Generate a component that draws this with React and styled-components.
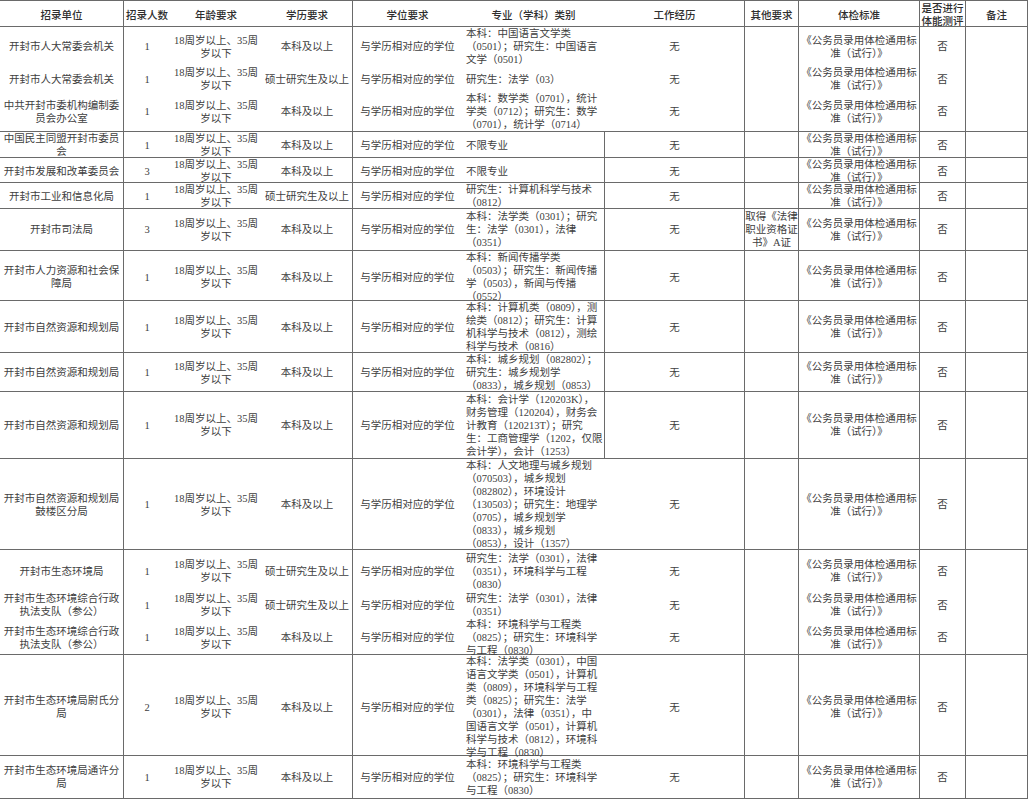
import styled, { createGlobalStyle } from "styled-components";

const GlobalStyle = createGlobalStyle`
  html, body {
    margin: 0;
    padding: 0;
    background: #ffffff;
  }
  body {
    font-family: "Liberation Serif", "Noto Sans CJK SC", serif;
  }
`;

const COLS = "124px 46px 92px 91px 109px 143px 140px 54px 121px 46px 62px";
const RULE = "1px solid #6a6a6a";

const AGE = ["18周岁以上、35周", "岁以下"];
const EXAM = ["《公务员录用体检通用标", "准（试行）》"];
const DEGREE = "与学历相对应的学位";

const rows = [
  { h: 39, line: false, unit: ["开封市人大常委会机关"], n: 1, edu: "本科及以上",
    major: ["本科：中国语言文学类", "（0501）；研究生：中国语言", "文学（0501）"] },
  { h: 26, line: false, unit: ["开封市人大常委会机关"], n: 1, edu: "硕士研究生及以上",
    major: ["研究生：法学（03）"] },
  { h: 40, line: true, unit: ["中共开封市委机构编制委", "员会办公室"], n: 1, edu: "本科及以上",
    major: ["本科：数学类（0701），统计", "学类（0712）；研究生：数学", "（0701），统计学（0714）"] },
  { h: 26, line: true, mid: true, unit: ["中国民主同盟开封市委员", "会"], n: 1, edu: "本科及以上",
    major: ["不限专业"] },
  { h: 25, line: true, mid: true, unit: ["开封市发展和改革委员会"], n: 3, edu: "本科及以上",
    major: ["不限专业"] },
  { h: 26, line: true, mid: true, unit: ["开封市工业和信息化局"], n: 1, edu: "硕士研究生及以上",
    major: ["研究生：计算机科学与技术", "（0812）"] },
  { h: 42, line: true, mid: true, unit: ["开封市司法局"], n: 3, edu: "本科及以上",
    major: ["本科：法学类（0301）；研究", "生：法学（0301），法律", "（0351）"],
    other: ["取得《法律", "职业资格证", "书》A证"] },
  { h: 50, line: true, mid: true, unit: ["开封市人力资源和社会保", "障局"], n: 1, edu: "本科及以上",
    major: ["本科：新闻传播学类", "（0503）；研究生：新闻传播", "学（0503），新闻与传播", "（0552）"] },
  { h: 52, line: true, mid: true, unit: ["开封市自然资源和规划局"], n: 1, edu: "本科及以上",
    major: ["本科：计算机类（0809），测", "绘类（0812）；研究生：计算", "机科学与技术（0812），测绘", "科学与技术（0816）"] },
  { h: 39, line: true, mid: true, unit: ["开封市自然资源和规划局"], n: 1, edu: "本科及以上",
    major: ["本科：城乡规划（082802）；", "研究生：城乡规划学", "（0833），城乡规划（0853）"] },
  { h: 67, line: true, mid: true, unit: ["开封市自然资源和规划局"], n: 1, edu: "本科及以上",
    major: ["本科：会计学（120203K），", "财务管理（120204），财务会", "计教育（120213T）；研究", "生：工商管理学（1202，仅限", "会计学），会计（1253）"] },
  { h: 91, line: true, unit: ["开封市自然资源和规划局", "鼓楼区分局"], n: 1, edu: "本科及以上",
    major: ["本科：人文地理与城乡规划", "（070503），城乡规划", "（082802），环境设计", "（130503）；研究生：地理学", "（0705），城乡规划学", "（0833），城乡规划", "（0853），设计（1357）"] },
  { h: 42, line: false, unit: ["开封市生态环境局"], n: 1, edu: "硕士研究生及以上",
    major: ["研究生：法学（0301），法律", "（0351），环境科学与工程", "（0830）"] },
  { h: 26, line: false, unit: ["开封市生态环境综合行政", "执法支队（参公）"], n: 1, edu: "硕士研究生及以上",
    major: ["研究生：法学（0301），法律", "（0351）"] },
  { h: 37, line: true, unit: ["开封市生态环境综合行政", "执法支队（参公）"], n: 1, edu: "本科及以上",
    major: ["本科：环境科学与工程类", "（0825）；研究生：环境科学", "与工程（0830）"] },
  { h: 101, line: true, unit: ["开封市生态环境局尉氏分", "局"], n: 2, edu: "本科及以上",
    major: ["本科：法学类（0301），中国", "语言文学类（0501），计算机", "类（0809），环境科学与工程", "类（0825）；研究生：法学", "（0301），法律（0351），中", "国语言文学（0501），计算机", "科学与技术（0812），环境科", "学与工程（0830）"] },
  { h: 43, line: true, unit: ["开封市生态环境局通许分", "局"], n: 1, edu: "本科及以上",
    major: ["本科：环境科学与工程类", "（0825）；研究生：环境科学", "与工程（0830）"] },
];

const Sheet = styled.div`
  width: 1028px;
  border-top: ${RULE};
  color: #404040;
  font-size: 10.5px;
  line-height: 13px;
`;

const Row = styled.div`
  display: grid;
  grid-template-columns: ${COLS};
  height: ${(p) => p.$h}px;
  box-sizing: border-box;
  border-bottom: ${(p) => (p.$line ? RULE : "none")};
`;

const Cell = styled.div`
  display: flex;
  flex-direction: column;
  justify-content: center;
  align-items: ${(p) => (p.$left ? "flex-start" : "center")};
  text-align: ${(p) => (p.$left ? "left" : "center")};
  padding: 0 ${(p) => (p.$left ? "4px" : "1px")};
  border-right: ${(p) => (p.$rule ? RULE : "none")};
  white-space: nowrap;
  min-width: 0;
  font-weight: 400;
`;

const HeadCell = styled(Cell)`
  font-family: "Noto Sans CJK SC", sans-serif;
  font-weight: 500;
  color: #2e2e2e;
`;

const Line = styled.span`
  display: block;
`;

const Lines = ({ items }) =>
  items.map((t, i) => <Line key={i}>{t}</Line>);

const Header = () => (
  <Row $h={26} $line>
    <HeadCell $rule>招录单位</HeadCell>
    <HeadCell>招录人数</HeadCell>
    <HeadCell>年龄要求</HeadCell>
    <HeadCell $rule>学历要求</HeadCell>
    <HeadCell>学位要求</HeadCell>
    <HeadCell>专业（学科）类别</HeadCell>
    <HeadCell $rule>工作经历</HeadCell>
    <HeadCell $rule>其他要求</HeadCell>
    <HeadCell $rule>体检标准</HeadCell>
    <HeadCell $rule>
      <Lines items={["是否进行", "体能测评"]} />
    </HeadCell>
    <HeadCell $rule>备注</HeadCell>
  </Row>
);

const PostRow = ({ row }) => (
  <Row $h={row.h} $line={row.line}>
    <Cell $rule>
      <Lines items={row.unit} />
    </Cell>
    <Cell>{row.n}</Cell>
    <Cell>
      <Lines items={AGE} />
    </Cell>
    <Cell $rule>{row.edu}</Cell>
    <Cell>{DEGREE}</Cell>
    <Cell $left $rule={row.mid}>
      <Lines items={row.major} />
    </Cell>
    <Cell $rule>无</Cell>
    <Cell $rule>{row.other && <Lines items={row.other} />}</Cell>
    <Cell $rule>
      <Lines items={EXAM} />
    </Cell>
    <Cell $rule>否</Cell>
    <Cell $rule />
  </Row>
);

export default function App() {
  return (
    <>
      <GlobalStyle />
      <Sheet>
        <Header />
        {rows.map((row, i) => (
          <PostRow key={i} row={row} />
        ))}
      </Sheet>
    </>
  );
}
